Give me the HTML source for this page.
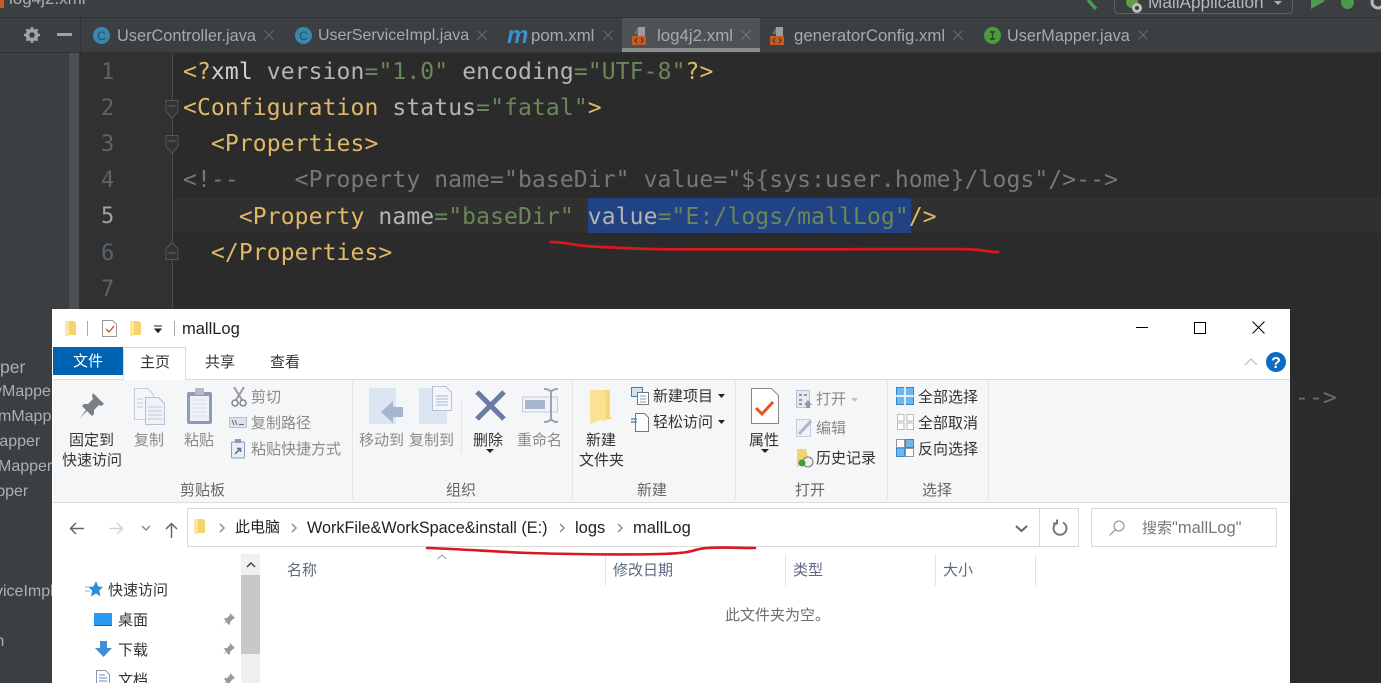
<!DOCTYPE html>
<html><head><meta charset="utf-8">
<style>
html,body{margin:0;padding:0;width:1381px;height:683px;overflow:hidden;background:#2b2b2b}
#r{position:relative;width:1381px;height:683px;overflow:hidden;font-family:"Liberation Sans","Noto Sans CJK SC",sans-serif}
.b{position:absolute}
.t{position:absolute;white-space:pre;line-height:20px}
.c{position:absolute;left:183px;white-space:pre;font:23px/36px "DejaVu Sans Mono",monospace;letter-spacing:.11px;color:#b4b4b4}
.n{position:absolute;white-space:pre;font:22px/36px "DejaVu Sans Mono",monospace;color:#606366;left:101px}
.y{color:#e0b868}.g{color:#6a8759}
.tab{font-size:16px;color:#a4abb0;top:26px}
.z{font-size:15px;color:#333}
.d{font-size:15px;color:#8a8a8a}
.s{font-size:15px;color:#666}
.l{font-size:16px;color:#a9b0b5}
.h{font-size:15px;color:#5b6b80}
svg{position:absolute;overflow:visible}
</style></head><body><div id="r">
<!-- IDE chrome -->
<div class="b" style="left:0;top:0;width:1381px;height:17px;background:#3c3f41;border-bottom:1px solid #323232"></div>
<div class="b" style="left:0;top:18px;width:1381px;height:34px;background:#3c3f41"></div>
<div class="b" style="left:0;top:52px;width:1381px;height:1px;background:#323232"></div>
<div class="b" style="left:79px;top:53px;width:93px;height:256px;background:#2f3133"></div>
<div class="b" style="left:0;top:0;width:4px;height:8px;background:#c75a22"></div>
<div class="t" style="left:9px;top:-11px;font-size:17px;color:#a9b0b5">log4j2.xml</div>
<div class="b" style="left:80px;top:18px;width:1px;height:34px;background:#333"></div>
<svg style="left:24px;top:27px" width="16" height="16" viewBox="0 0 16 16"><circle cx="8" cy="8" r="4.6" fill="none" stroke="#a0a4a6" stroke-width="3.6"/><path d="M8 0v3M8 13v3M0 8h3M13 8h3M2.300 2.300l2 2M11.700 11.700l2 2M2.300 13.700l2-2M11.700 4.300l2-2" stroke="#a0a4a6" stroke-width="2.400"/></svg>
<div class="b" style="left:57px;top:33px;width:15px;height:3px;background:#a0a4a6"></div>

<svg style="left:93px;top:27px" width="17" height="17"><circle cx="8.500" cy="8.500" r="8.500" fill="#3a87ad"/><text x="8.500" y="13" text-anchor="middle" font-size="12" font-family="Liberation Sans" fill="#1f4f6a">C</text></svg>
<div class="t tab" style="left:117px;font-size:16.350px">UserController.java</div>
<svg style="left:264px;top:30px" width="10" height="10"><path d="M.5.500l9 9M9.500.500l-9 9" stroke="#66696b" stroke-width="1.100"/></svg>
<svg style="left:295px;top:27px" width="17" height="17"><circle cx="8.500" cy="8.500" r="8.500" fill="#3a87ad"/><text x="8.500" y="13" text-anchor="middle" font-size="12" font-family="Liberation Sans" fill="#1f4f6a">C</text></svg>
<div class="t tab" style="left:318px">UserServiceImpl.java</div>
<svg style="left:477px;top:30px" width="10" height="10"><path d="M.5.500l9 9M9.500.500l-9 9" stroke="#66696b" stroke-width="1.100"/></svg>
<div class="t" style="left:507px;top:24px;font:italic bold 24px/24px 'Liberation Sans';color:#3d8fc4">m</div>
<div class="t tab" style="left:531px;font-size:16.800px">pom.xml</div>
<svg style="left:603px;top:30px" width="10" height="10"><path d="M.5.500l9 9M9.500.500l-9 9" stroke="#66696b" stroke-width="1.100"/></svg>
<div class="b" style="left:622px;top:18px;width:138px;height:34px;background:#4e5254"></div>
<div class="b" style="left:622px;top:48px;width:138px;height:4px;background:#8a8d8f"></div>
<svg style="left:632px;top:26px" width="20" height="20"><path d="M6 1h7v9H6z" fill="#9a9da0"/><path d="M6 1L2 8h4z" fill="#6e7173"/><rect x="0" y="10" width="14" height="9" fill="#c75a22"/><path d="M5 12l-2 2.500 2 2.500M9 12l2 2.500-2 2.500" fill="none" stroke="#3c2a20" stroke-width="1"/></svg>
<div class="t tab" style="left:657px;font-size:16.900px">log4j2.xml</div>
<svg style="left:741px;top:30px" width="10" height="10"><path d="M.5.500l9 9M9.500.500l-9 9" stroke="#74777a" stroke-width="1.100"/></svg>
<svg style="left:770px;top:26px" width="20" height="20"><path d="M6 1h7v9H6z" fill="#9a9da0"/><path d="M6 1L2 8h4z" fill="#6e7173"/><rect x="0" y="10" width="14" height="9" fill="#c75a22"/><path d="M5 12l-2 2.500 2 2.500M9 12l2 2.500-2 2.500" fill="none" stroke="#3c2a20" stroke-width="1"/></svg>
<div class="t tab" style="left:794px;font-size:16.800px">generatorConfig.xml</div>
<svg style="left:953px;top:30px" width="10" height="10"><path d="M.5.500l9 9M9.500.500l-9 9" stroke="#66696b" stroke-width="1.100"/></svg>
<svg style="left:984px;top:27px" width="17" height="17"><circle cx="8.500" cy="8.500" r="8.500" fill="#4f9a3c"/><path d="M6 5h5M6 12h5M8.500 5v7" stroke="#1e4a18" stroke-width="1.400"/></svg>
<div class="t tab" style="left:1007px;font-size:16.250px">UserMapper.java</div>
<svg style="left:1138px;top:30px" width="10" height="10"><path d="M.5.500l9 9M9.500.500l-9 9" stroke="#66696b" stroke-width="1.100"/></svg>

<!-- run toolbar -->
<svg style="left:1085px;top:0" width="20" height="12"><path d="M3 0l8 9" stroke="#4c9a50" stroke-width="3.500" fill="none"/></svg>
<div class="b" style="left:1114px;top:-10px;width:177px;height:22px;border:1px solid #5e6163;border-radius:4px"></div>
<svg style="left:1125px;top:0" width="22" height="14"><circle cx="7" cy="2" r="6" fill="#5f9c46"/><circle cx="12" cy="8" r="5" fill="#bcbfc1"/><circle cx="12" cy="8" r="2" fill="#3c3f41"/></svg>
<div class="t" style="left:1148px;top:-8px;font-size:17.200px;color:#b4b8ba">MallApplication</div>
<svg style="left:1274px;top:1px" width="10" height="6"><path d="M0 0h8L4 4z" fill="#a9b0b5"/></svg>
<svg style="left:1311px;top:0" width="14" height="9"><path d="M0 -6L14 1 0 9z" fill="#4c9a50"/></svg>
<svg style="left:1340px;top:0" width="16" height="10"><ellipse cx="7.500" cy="2" rx="6.500" ry="7" fill="#4c9a50"/></svg>
<svg style="left:1370px;top:0" width="11" height="10"><circle cx="8" cy="2" r="6" fill="none" stroke="#b4b8ba" stroke-width="3"/></svg>

<!-- left panel -->
<div class="b" style="left:0;top:53px;width:69px;height:630px;background:#3c3f41"></div>
<div class="b" style="left:69px;top:53px;width:10px;height:630px;background:#4d5052"></div>
<div class="b" style="left:79px;top:53px;width:1px;height:630px;background:#323232"></div>
<div class="b" style="left:172px;top:53px;width:1px;height:256px;background:#4a4c4e"></div>
<div class="b" style="left:173px;top:198px;width:1208px;height:35px;background:#303030"></div>

<div class="n" style="top:55px">1</div><div class="n" style="top:91px">2</div><div class="n" style="top:127px">3</div><div class="n" style="top:163px">4</div><div class="n" style="top:199px;color:#a4a3a3">5</div><div class="n" style="top:236px">6</div><div class="n" style="top:272px">7</div>
<svg style="left:165px;top:100px" width="14" height="20"><path d="M1 .5h12v11L7 18 1 11.500z" fill="#313335" stroke="#555"/><path d="M3.500 6h7" stroke="#666"/></svg>
<svg style="left:165px;top:135px" width="14" height="20"><path d="M1 .5h12v11L7 18 1 11.500z" fill="#313335" stroke="#555"/><path d="M3.500 6h7" stroke="#666"/></svg>
<svg style="left:165px;top:242px" width="14" height="20"><path d="M7 .5l6 6v11H1v-11z" fill="#313335" stroke="#555"/><path d="M3.500 11h7" stroke="#666"/></svg>

<div class="b" style="left:588px;top:198px;width:323px;height:35px;background:#214283"></div>
<div class="c" style="top:54px"><span class="y">&lt;?</span><span style="color:#d0d0d0">xml</span> version<span class="g">=</span><span class="g">"1.0"</span> encoding<span class="g">=</span><span class="g">"UTF-8"</span><span class="y">?&gt;</span></div>
<div class="c" style="top:90px"><span class="y">&lt;Configuration</span> status<span class="g">=</span><span class="g">"fatal"</span><span class="y">&gt;</span></div>
<div class="c" style="top:126px">  <span class="y">&lt;Properties&gt;</span></div>
<div class="c" style="top:162px;color:#75787a">&lt;!--    &lt;Property name="baseDir" value="${sys:user.home}/logs"/&gt;--&gt;</div>
<div class="c" style="top:199px">    <span class="y">&lt;Property</span> name<span class="g">="baseDir"</span> value<span class="g">="E:/logs/mallLog"</span><span class="y">/&gt;</span></div>
<div class="c" style="top:235px">  <span class="y">&lt;/Properties&gt;</span></div>

<!-- left panel file list -->
<div class="t l" style="left:-34px;top:357px;font-size:17.500px">Mapper</div>
<div class="t l" style="left:-6px;top:382px">yMapper</div>
<div class="t l" style="left:-2px;top:407px">mMapper</div>
<div class="t l" style="left:-14px;top:432px">Mapper</div>
<div class="t l" style="left:-2px;top:457px">Mapper</div>
<div class="t l" style="left:-26px;top:482px">Mapper</div>
<div class="t l" style="left:-5px;top:582px">viceImpl</div>
<div class="t l" style="left:-9px;top:632px">m</div>
<div class="c" style="left:1295px;top:380px;color:#6b6e70">--&gt;</div>

<!-- Explorer window -->
<div class="b" style="left:52px;top:309px;width:1238px;height:374px;background:#fff"></div>
<svg style="left:64px;top:320px" width="14" height="18"><path d="M1 1h9l2 2v12H5l-4 1z" fill="#f5d36c"/><path d="M1 1h4v15H1z" fill="#fbe7a1"/></svg>
<div class="b" style="left:87px;top:321px;width:1px;height:15px;background:#aaa"></div>
<svg style="left:102px;top:320px" width="16" height="18"><path d="M.5.500h10l4 4v12H.5z" fill="#fff" stroke="#999"/><path d="M4 9l3 3 5-6" fill="none" stroke="#d9542b" stroke-width="1.400"/></svg>
<svg style="left:129px;top:320px" width="14" height="18"><path d="M1 1h9l2 2v12H5l-4 1z" fill="#f5d36c"/><path d="M1 1h4v15H1z" fill="#fbe7a1"/></svg>
<svg style="left:154px;top:326px" width="9" height="7"><path d="M0 0h8M1 3h6L4 6.500z" stroke="#222" fill="#222"/></svg>
<div class="b" style="left:174px;top:321px;width:1px;height:15px;background:#aaa"></div>
<div class="t" style="left:182px;top:319px;font-size:16.500px;color:#222">mallLog</div>
<div class="b" style="left:1136px;top:327px;width:12px;height:1px;background:#000"></div>
<div class="b" style="left:1194px;top:322px;width:10px;height:10px;border:1.500px solid #000"></div>
<svg style="left:1252px;top:321px" width="13" height="13"><path d="M.5.500l12 12M12.500.500l-12 12" stroke="#000"/></svg>

<div class="b" style="left:53px;top:347px;width:70px;height:28px;background:#0063b1"></div>
<div class="t" style="left:73px;top:352px;font-size:15px;color:#fff">文件</div>
<div class="b" style="left:123px;top:347px;width:63px;height:33px;background:#fff;border:1px solid #dadbdc;border-bottom:0;box-sizing:border-box;z-index:2"></div>
<div class="t z" style="left:140px;top:353px;z-index:3">主页</div>
<div class="t z" style="left:205px;top:353px">共享</div>
<div class="t z" style="left:270px;top:353px">查看</div>
<svg style="left:1244px;top:357px" width="14" height="9"><path d="M1 8l6-6 6 6" fill="none" stroke="#bbb" stroke-width="1.200"/></svg>
<svg style="left:1266px;top:352px" width="20" height="20"><circle cx="10" cy="10" r="10" fill="#0a6cc2"/><text x="10" y="16" text-anchor="middle" font-size="16" font-weight="bold" font-family="Liberation Sans" fill="#fff">?</text></svg>

<div class="b" style="left:53px;top:379px;width:1237px;height:124px;background:#f5f6f7;border-top:1px solid #dadbdc;border-bottom:1px solid #dadbdc;box-sizing:border-box"></div>
<div class="b" style="left:352px;top:381px;width:1px;height:119px;background:#e6e7e8"></div>
<div class="b" style="left:572px;top:381px;width:1px;height:119px;background:#e6e7e8"></div>
<div class="b" style="left:735px;top:381px;width:1px;height:119px;background:#e6e7e8"></div>
<div class="b" style="left:887px;top:381px;width:1px;height:119px;background:#e6e7e8"></div>
<div class="b" style="left:988px;top:381px;width:1px;height:119px;background:#e6e7e8"></div>
<div class="b" style="left:461px;top:398px;width:1px;height:55px;background:#e3e4e5"></div>

<!-- clipboard -->
<svg style="left:78px;top:392px" width="28" height="28"><path d="M15 1l11 11-3 2-2-1-5 5 0 4-2 2-5-5-7 7 6-8-4-4 2-2 4 0 5-5-1-3z" fill="#7a7f84"/></svg>
<div class="t z" style="left:69px;top:431px">固定到</div>
<div class="t z" style="left:62px;top:451px">快速访问</div>
<svg style="left:134px;top:388px" width="32" height="38"><path d="M.5.500h13l6 6v25H.5z" fill="#f4f6fa" stroke="#c6cdd9"/><path d="M11.500 9.500h13l6 6v21h-19z" fill="#eef1f7" stroke="#b8c1d2"/><path d="M14 19h14M14 23h14M14 27h14M14 31h14M3 11h6M3 15h6M3 19h6" stroke="#c3cbdb"/></svg>
<div class="t d" style="left:134px;top:431px">复制</div>
<svg style="left:186px;top:387px" width="28" height="38"><rect x="1" y="5" width="25" height="32" rx="2" fill="#8b9bb8"/><rect x="4" y="9" width="19" height="25" fill="#eef2f8"/><path d="M6 13h15M6 17h15M6 21h15M6 25h15M6 29h15" stroke="#d5dcea"/><rect x="9" y="1" width="9" height="7" fill="#b5bcc9"/></svg>
<div class="t d" style="left:184px;top:431px">粘贴</div>
<svg style="left:231px;top:387px" width="16" height="20"><path d="M3 0l8 13M13 0L5 13" stroke="#99a" stroke-width="2"/><circle cx="4" cy="16" r="3" fill="none" stroke="#7d8595" stroke-width="1.500"/><circle cx="12" cy="16" r="3" fill="none" stroke="#7d8595" stroke-width="1.500"/></svg>
<div class="t d" style="left:251px;top:388px">剪切</div>
<svg style="left:229px;top:417px" width="18" height="11"><rect x=".5" y=".5" width="17" height="10" fill="#dce3ef" stroke="#b8c1d2"/><path d="M3 3l2 5M6 3l2 5M10 7.500h5" stroke="#667"/></svg>
<div class="t d" style="left:251px;top:414px">复制路径</div>
<svg style="left:231px;top:439px" width="15" height="20"><rect x=".5" y="3" width="13" height="16" rx="1" fill="#e8edf5" stroke="#8b9bb8"/><rect x="4" y="0" width="6" height="4" fill="#8b9bb8"/><path d="M4 15l5-5M6 9.500h3.500V13" stroke="#56708f" stroke-width="1.500" fill="none"/></svg>
<div class="t d" style="left:251px;top:440px">粘贴快捷方式</div>
<div class="t s" style="left:180px;top:481px">剪贴板</div>

<!-- organise -->
<svg style="left:369px;top:388px" width="34" height="37"><rect x="0" y="0" width="27" height="36" fill="#dce5f2"/><path d="M12 27L24 16v6h10v10H24v6z" transform="translate(0,-3)" fill="#a7b6cf"/></svg>
<div class="t d" style="left:359px;top:431px">移动到</div>
<svg style="left:419px;top:386px" width="34" height="39"><rect x="0" y="2" width="28" height="36" fill="#dce5f2"/><path d="M13.500.500h13l6 6v18h-19z" fill="#f3f5fa" stroke="#b8c1d2"/><path d="M17 10h12M17 13h12M17 16h12M17 19h12" stroke="#a7b6cf"/></svg>
<div class="t d" style="left:409px;top:431px">复制到</div>
<svg style="left:475px;top:390px" width="31" height="31"><path d="M2 2l27 27M29 2L2 29" stroke="#6b7ba1" stroke-width="5"/></svg>
<div class="t z" style="left:473px;top:431px">删除</div>
<svg style="left:486px;top:449px" width="9" height="5"><path d="M0 0h8L4 4z" fill="#222"/></svg>
<svg style="left:522px;top:388px" width="38" height="36"><rect x=".5" y="9" width="35" height="15" fill="#f1f3f7" stroke="#c5cad4"/><rect x="3" y="12" width="20" height="9" fill="#a7b6cf"/><path d="M22 1c4 0 6 1 7 3 1-2 3-3 7-3M22 34c4 0 6-1 7-3 1 2 3 3 7 3M29 3v30" stroke="#9aa3b4" stroke-width="2" fill="none"/></svg>
<div class="t d" style="left:517px;top:431px">重命名</div>
<div class="t s" style="left:446px;top:481px">组织</div>

<!-- new -->
<svg style="left:588px;top:389px" width="26" height="36"><path d="M2 1h20v26l2 3-12 1-10 4z" fill="#f7d878"/><path d="M2 1h11l5 3v29l-6-2-10 4z" fill="#fbe49a" opacity=".8"/></svg>
<div class="t z" style="left:586px;top:431px">新建</div>
<div class="t z" style="left:579px;top:451px">文件夹</div>
<svg style="left:631px;top:387px" width="18" height="18"><rect x=".5" y=".5" width="11" height="9" fill="#cfe2f5" stroke="#3d7fb8"/><rect x="6.500" y="5.500" width="11" height="12" fill="#fff" stroke="#777"/><path d="M9 9h6M9 12h6M9 15h6" stroke="#999"/></svg>
<div class="t z" style="left:653px;top:387px">新建项目</div>
<svg style="left:718px;top:394px" width="8" height="5"><path d="M0 0h7L3.500 4z" fill="#222"/></svg>
<svg style="left:631px;top:413px" width="18" height="19"><path d="M4.500.500h9l4 4v14h-13z" fill="#fff" stroke="#777"/><path d="M0 6h6M0 9h6" stroke="#2c7fc0" stroke-width="1.200"/></svg>
<div class="t z" style="left:653px;top:413px">轻松访问</div>
<svg style="left:718px;top:420px" width="8" height="5"><path d="M0 0h7L3.500 4z" fill="#222"/></svg>
<div class="t s" style="left:637px;top:481px">新建</div>

<!-- open -->
<svg style="left:751px;top:388px" width="28" height="37"><path d="M.5.500h20l7 7v28H.5z" fill="#fff" stroke="#8a8a8a"/><path d="M5 20l6 6 11-12" fill="none" stroke="#e2571e" stroke-width="3"/></svg>
<div class="t z" style="left:749px;top:431px">属性</div>
<svg style="left:761px;top:449px" width="9" height="5"><path d="M0 0h8L4 4z" fill="#222"/></svg>
<svg style="left:796px;top:390px" width="17" height="19"><rect x=".5" y=".5" width="13" height="17" fill="#e4e9f2" stroke="#b8c1d2"/><path d="M3 4h3v2H3zM8 4h3v2H8zM3 9h3v2H3zM3 13h3v2H3z" fill="#8a97ad"/><path d="M12 10l4 5h-2v3h-4v-3H8z" fill="#8a97ad"/></svg>
<div class="t d" style="left:816px;top:390px">打开</div>
<svg style="left:851px;top:398px" width="8" height="5"><path d="M0 0h7L3.500 4z" fill="#c2c2c2"/></svg>
<svg style="left:796px;top:419px" width="17" height="18"><rect x=".5" y=".5" width="14" height="17" fill="#eef1f6" stroke="#c6cdd9"/><path d="M3 15L15 2" stroke="#a7b6cf" stroke-width="3"/></svg>
<div class="t d" style="left:816px;top:419px">编辑</div>
<svg style="left:796px;top:449px" width="18" height="19"><path d="M1 0h9l2 8v8H4l-3 2z" fill="#f5d36c"/><circle cx="12" cy="13" r="5" fill="#eee" stroke="#777"/><circle cx="6" cy="14" r="3.500" fill="#3f9e3f"/></svg>
<div class="t z" style="left:816px;top:449px">历史记录</div>
<div class="t s" style="left:795px;top:481px">打开</div>

<!-- select -->
<svg style="left:896px;top:387px" width="18" height="18"><rect x=".5" y=".5" width="17" height="17" fill="#6fb8ee" stroke="#3388cc"/><path d="M9 0v18M0 9h18" stroke="#fff" stroke-width="1.500"/></svg>
<div class="t z" style="left:918px;top:388px">全部选择</div>
<svg style="left:897px;top:414px" width="17" height="16"><path d="M.5.500h6.500v6.500H.5zM10 .5h6.500v6.500H10zM.5 9h6.500v6.500H.5zM10 9h6.500v6.500H10z" fill="#fff" stroke="#bbb"/></svg>
<div class="t z" style="left:918px;top:414px">全部取消</div>
<svg style="left:896px;top:439px" width="18" height="18"><path d="M.5 9h8v8.500h-8zM9.500.5h8v8h-8z" fill="#6fb8ee" stroke="#3388cc"/><path d="M.5.500h8v8h-8zM9.500 9.500h8v8h-8z" fill="#fff" stroke="#999"/></svg>
<div class="t z" style="left:918px;top:440px">反向选择</div>
<div class="t s" style="left:922px;top:481px">选择</div>

<!-- nav -->
<svg style="left:69px;top:522px" width="16" height="13"><path d="M15 6.500H2M7 1L1.500 6.500 7 12" fill="none" stroke="#666" stroke-width="1.500"/></svg>
<svg style="left:108px;top:522px" width="16" height="13"><path d="M1 6.500h13M9 1l5.500 5.500L9 12" fill="none" stroke="#d4d4d4" stroke-width="1.500"/></svg>
<svg style="left:141px;top:525px" width="10" height="7"><path d="M1 1l4 4 4-4" fill="none" stroke="#888" stroke-width="1.500"/></svg>
<svg style="left:165px;top:522px" width="13" height="16"><path d="M6.500 16V2M1 7l5.500-5.500L12 7" fill="none" stroke="#666" stroke-width="1.500"/></svg>
<div class="b" style="left:187px;top:508px;width:892px;height:39px;border:1px solid #d9d9d9;box-sizing:border-box"></div>
<div class="b" style="left:1039px;top:508px;width:1px;height:39px;background:#d9d9d9"></div>
<svg style="left:193px;top:518px" width="13" height="18"><path d="M1 1h9l2 2v12H5l-4 1z" fill="#f5d36c"/><path d="M1 1h4v15H1z" fill="#fbe7a1"/></svg>
<svg style="left:219px;top:523px" width="6" height="10"><path d="M1 1l4 4-4 4" fill="none" stroke="#888" stroke-width="1.400"/></svg>
<div class="t" style="left:235px;top:518px;font-size:15px;color:#222">此电脑</div>
<svg style="left:291px;top:523px" width="6" height="10"><path d="M1 1l4 4-4 4" fill="none" stroke="#888" stroke-width="1.400"/></svg>
<div class="t" style="left:307px;top:518px;font-size:16.200px;color:#222">WorkFile&amp;WorkSpace&amp;install (E:)</div>
<svg style="left:559px;top:523px" width="6" height="10"><path d="M1 1l4 4-4 4" fill="none" stroke="#888" stroke-width="1.400"/></svg>
<div class="t" style="left:575px;top:518px;font-size:16.500px;color:#222">logs</div>
<svg style="left:617px;top:523px" width="6" height="10"><path d="M1 1l4 4-4 4" fill="none" stroke="#888" stroke-width="1.400"/></svg>
<div class="t" style="left:633px;top:518px;font-size:16.500px;color:#222">mallLog</div>
<svg style="left:1015px;top:525px" width="13" height="8"><path d="M1 1l5.500 5L12 1" fill="none" stroke="#666" stroke-width="2"/></svg>
<svg style="left:1052px;top:519px" width="16" height="17"><path d="M5 3.500a6.500 6.500 0 1 0 6 0M5 .5v4H1" fill="none" stroke="#777" stroke-width="2"/></svg>
<div class="b" style="left:1091px;top:508px;width:186px;height:39px;border:1px solid #d9d9d9;box-sizing:border-box"></div>
<svg style="left:1109px;top:520px" width="16" height="16"><circle cx="10" cy="6" r="5" fill="none" stroke="#888"/><path d="M6.500 9.500L.5 15.500" stroke="#888"/></svg>
<div class="t" style="left:1142px;top:518px;font-size:15px;color:#777">搜索<span style="font-size:16.500px">"mallLog"</span></div>

<!-- nav pane -->
<div class="b" style="left:241px;top:554px;width:19px;height:129px;background:#f0f0f0"></div>
<div class="b" style="left:241px;top:575px;width:19px;height:79px;background:#c8c8c8"></div>
<svg style="left:246px;top:561px" width="10" height="7"><path d="M1 6l4-4 4 4" fill="none" stroke="#444" stroke-width="1.500"/></svg>
<svg style="left:85px;top:581px" width="18" height="17"><path d="M11 0l2.200 5.500 4.800.5-3.700 3.500 1.200 6-4.500-3-5 3 1.200-6L3 6l5.500-.5z" fill="#2c8fd8"/><path d="M0 6h4M0 10h5" stroke="#7cc0ee"/></svg>
<div class="t z" style="left:108px;top:581px">快速访问</div>
<div class="b" style="left:94px;top:613px;width:18px;height:12px;background:#2a9af0;border-bottom:1px solid #1167b0"></div>
<div class="t z" style="left:118px;top:611px">桌面</div>
<svg style="left:95px;top:641px" width="17" height="17"><path d="M5 0h7v7h5l-8.500 9L0 7h5z" fill="#3d8fdc"/></svg>
<div class="t z" style="left:118px;top:641px">下载</div>
<svg style="left:96px;top:670px" width="14" height="18"><path d="M.5.500h9l4 4v13H.5z" fill="#fff" stroke="#8a97ad"/><path d="M3 5h6M3 8h8M3 11h8" stroke="#5a8fc0"/></svg>
<div class="t z" style="left:118px;top:671px">文档</div>
<svg style="left:222px;top:612px" width="14" height="14"><path d="M8 1l5 5-2 1-3 3v2l-1 1-3-3-3 3 3-4-2-2 1-1h2l3-3z" fill="#999"/></svg>
<svg style="left:222px;top:642px" width="14" height="14"><path d="M8 1l5 5-2 1-3 3v2l-1 1-3-3-3 3 3-4-2-2 1-1h2l3-3z" fill="#999"/></svg>
<svg style="left:222px;top:672px" width="14" height="14"><path d="M8 1l5 5-2 1-3 3v2l-1 1-3-3-3 3 3-4-2-2 1-1h2l3-3z" fill="#999"/></svg>

<!-- headers -->
<div class="t h" style="left:287px;top:561px">名称</div>
<div class="b" style="left:605px;top:554px;width:1px;height:32px;background:#e5e5e5"></div>
<div class="t h" style="left:613px;top:561px">修改日期</div>
<div class="b" style="left:785px;top:554px;width:1px;height:32px;background:#e5e5e5"></div>
<div class="t h" style="left:793px;top:561px">类型</div>
<div class="b" style="left:935px;top:554px;width:1px;height:32px;background:#e5e5e5"></div>
<div class="t h" style="left:943px;top:561px">大小</div>
<div class="b" style="left:1035px;top:554px;width:1px;height:32px;background:#e5e5e5"></div>
<svg style="left:437px;top:554px" width="10" height="6"><path d="M.5 5l4.500-4 4.500 4" fill="none" stroke="#999"/></svg>
<div class="t" style="left:725px;top:606px;font-size:15px;color:#6d6d6d">此文件夹为空。</div>

<!-- red annotations -->
<svg style="left:0;top:0;z-index:9" width="1381" height="683">
<path d="M551 242C560 242 565 243 577 245S620 248 650 249 900 249 947 249 980 252 998 252" fill="none" stroke="#d8171f" stroke-width="2.700" stroke-linecap="round"/>
<path d="M427 548C460 549 500 552 530 553S620 555 660 554 690 549 707 548 740 548 755 548" fill="none" stroke="#d8171f" stroke-width="2.600" stroke-linecap="round"/>
</svg>
</div></body></html>
